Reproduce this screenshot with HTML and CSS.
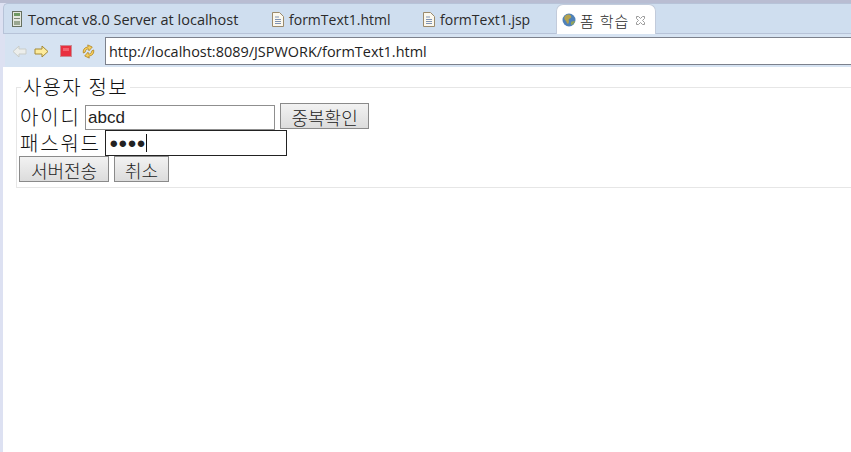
FILE: index.html
```html
<!DOCTYPE html>
<html lang="ko">

<head>
    <meta charset="UTF-8">
    <meta name="viewport" content="width=device-width, initial-scale=1.0">
    <title>폼 학습</title>
    <link rel="stylesheet" href="styles.css">
</head>

<body>

    <div class="tabs">
        <div class="tab tab-server">
            <svg class="tab-icon" width="10" height="16" viewBox="0 0 10 16">
                <rect x="0.5" y="0.5" width="9" height="15" fill="#e4e8df" stroke="#66705f" />
                <rect x="2" y="2" width="6" height="3" fill="#6f9a63" />
                <rect x="2" y="7" width="6" height="1" fill="#7d8676" />
                <rect x="2" y="10" width="6" height="4" fill="#9aa791" />
            </svg>
            <span>Tomcat v8.0 Server at localhost</span>
        </div>
        <div class="tab tab-html">
            <svg class="tab-icon" width="12" height="15" viewBox="0 0 12 15">
                <path d="M.5.5h7l4 4v10H.5z" fill="#fbf8ee" stroke="#9b8a6c" />
                <path d="M3 5h4M3 7.500h6M3 9.500h6M3 11.500h6" stroke="#7f93b5" />
            </svg>
            <span>formText1.html</span>
        </div>
        <div class="tab tab-jsp">
            <svg class="tab-icon" width="12" height="15" viewBox="0 0 12 15">
                <path d="M.5.5h7l4 4v10H.5z" fill="#fbf8ee" stroke="#9b8a6c" />
                <path d="M3 5h4M3 7.500h6M3 9.500h6M3 11.500h6" stroke="#7f93b5" />
            </svg>
            <span>formText1.jsp</span>
        </div>
        <div class="tab tab-active">
            <svg class="tab-icon" width="14" height="14" viewBox="0 0 14 14">
                <circle cx="7" cy="7" r="6.500" fill="#4f81b8" />
                <path d="M3 3c2-2 5-2 6 0 1 2-1 2-2 3s1 3-1 5C4 10 5 8 3 7 2 6 2 4 3 3z" fill="#b5a24e" />
                <path d="M9 9c1-1 3-1 4-1-1 3-3 4-4 4z" fill="#8fa35b" />
            </svg>
            <span class="tab-title">폼 학습</span>
            <svg class="tab-close" width="11" height="11" viewBox="0 0 11 11">
                <path d="M1.500 1.500h2l2 2 2-2h2v2l-2 2 2 2v2h-2l-2-2-2 2h-2v-2l2-2-2-2z" fill="#fff" stroke="#9a9a9a" />
            </svg>
        </div>
    </div>

    <div class="toolbar">
        <div class="nav-icons">
            <svg class="nav-back" width="15" height="13" viewBox="0 0 15 13">
                <path d="M7 1 1 6.500 7 12V9h7V4H7z" fill="#eceeec" stroke="#c9cdc9" />
            </svg>
            <svg class="nav-forward" width="15" height="13" viewBox="0 0 15 13">
                <path d="M8 1l6 5.500L8 12V9H1V4h7z" fill="#fdeb9c" stroke="#a58a34" />
            </svg>
            <svg class="nav-stop" width="12" height="12" viewBox="0 0 12 12">
                <rect x="0.500" y="0.500" width="11" height="11" fill="#e8303f" stroke="#c98a92" />
                <rect x="3" y="3" width="6" height="3" fill="#f4616c" />
            </svg>
            <svg class="nav-refresh" width="15" height="15" viewBox="0 0 15 15">
                <path d="M2 8c0-3 2-5 5-5h1V1l4 3-4 3V5H7C5.500 5 4.500 6 4 7.500z" fill="#f6cf5d" stroke="#b48a2a" stroke-width=".8" transform="rotate(-12 7 7)" />
                <path d="M13 7c0 3-2 5-5 5H7v2l-4-3 4-3v2h1c1.500 0 2.500-1 3-2.500z" fill="#f6cf5d" stroke="#b48a2a" stroke-width=".8" transform="rotate(-12 8 8)" />
            </svg>
        </div>
        <input class="url" type="text" value="http://localhost:8089/JSPWORK/formText1.html">
    </div>

    <div class="content">
        <fieldset class="user-box">
            <legend>사용자 정보</legend>
            <div class="row row-id">
                <label for="userid">아이디</label>
                <input class="field field-id" id="userid" type="text" value="abcd">
                <button class="btn btn-check" type="button">중복확인</button>
            </div>
            <div class="row">
                <label for="userpw">패스워드</label>
                <div class="field field-pw" id="userpw"><span class="dots">●●●●</span><span class="caret"></span></div>
            </div>
            <div class="row row-buttons">
                <button class="btn btn-send" type="button">서버전송</button>
                <button class="btn btn-cancel" type="button">취소</button>
            </div>
        </fieldset>
    </div>

</body>

</html>
```

FILE: styles.css
```css
html,
body {
    height: 100%;
}

body {
    margin: 0;
    padding: 0;
    overflow: hidden;
    display: flex;
    flex-direction: column;
    background-color: #dde1f2;
    border-top: 3px solid #b9bdd2;
    box-sizing: border-box;
    font-family: 'Noto Sans CJK KR', sans-serif;
    color: #111;
}

.tabs {
    height: 31px;
    margin-left: 3px;
    flex: none;
    display: flex;
    align-items: center;
    box-sizing: border-box;
    background-color: #cfdeef;
    border: 1px solid #b7c3d8;
    border-right: none;
    border-radius: 5px 0 0 0;
    font-family: 'Open Sans', 'Noto Sans CJK KR', sans-serif;
    font-size: 14px;
    color: #2b2b2b;
}

.tab {
    display: flex;
    align-items: center;
    height: 100%;
    padding-top: 1px;
    box-sizing: border-box;
    white-space: nowrap;
}

.tab-icon {
    flex: none;
    margin-right: 5px;
}

.tab-server {
    padding-left: 8px;
    width: 268px;
    font-size: 14.5px;
}

.tab-server .tab-icon {
    margin-right: 6px;
}

.tab-html {
    width: 151px;
}

.tab-jsp {
    width: 133px;
}

.tab-active {
    width: 100px;
    height: 31px;
    margin-top: 1px;
    padding-left: 5px;
    background-color: #fff;
    border-radius: 7px 7px 0 0;
    border: 1px solid #c2cbdb;
    border-bottom: none;
}

.tab-active .tab-icon {
    margin-right: 4px;
}

.tab-title {
    font-size: 15px;
    letter-spacing: 1px;
    font-weight: 300;
}

.tab-close {
    margin-left: 6px;
}

.toolbar {
    flex: none;
    height: 33px;
    margin-left: 5px;
    display: flex;
    align-items: center;
    background-color: #d6e3f2;
    box-sizing: border-box;
    padding-top: 1px;
}

.nav-icons {
    width: 100px;
    display: flex;
    align-items: center;
    padding-left: 7px;
    box-sizing: border-box;
}

.nav-forward {
    margin-left: 7px;
}

.nav-stop {
    margin-left: 11px;
}

.nav-refresh {
    margin-left: 9px;
}

.url {
    flex: 1;
    min-width: 0;
    height: 28px;
    box-sizing: border-box;
    border: 1px solid #7c818c;
    border-right: none;
    padding: 0 3px;
    outline: none;
    font-family: 'Open Sans', sans-serif;
    font-size: 14.45px;
    color: #222;
}

.content {
    flex: 1;
    margin-left: 3px;
    background-color: #fff;
    padding: 10px 0 0 13px;
}

.user-box {
    margin: 0;
    padding: 7px 0 5px 2px;
    box-sizing: border-box;
    min-width: 0;
    border: 1px solid #e6e6e6;
    border-right: none;
}

legend {
    padding: 0 2px;
    margin-left: 2px;
    height: 20px;
    line-height: 20px;
    font-size: 20px;
    font-weight: 300;
    letter-spacing: 1.2px;
}

.row {
    display: flex;
    align-items: flex-end;
    height: 26px;
    line-height: 22px;
    font-size: 20px;
    font-weight: 300;
    letter-spacing: 1.8px;
    white-space: nowrap;
}

.row label {
    align-self: center;
    margin-left: 1px;
    margin-right: 4.5px;
}

.field {
    box-sizing: border-box;
    padding: 0 2px;
    outline: none;
    font-family: 'Liberation Sans', sans-serif;
    font-size: 17px;
    letter-spacing: 0;
    color: #222;
}

.field-id {
    width: 190px;
    height: 25px;
    border: 1px solid #8f8f8f;
}

.field-pw {
    width: 182px;
    height: 26px;
    border: 1px solid #222;
    display: flex;
    align-items: center;
}

.dots {
    font-size: 15px;
    letter-spacing: 0;
    margin-left: 1px;
}

.caret {
    width: 1px;
    height: 18px;
    background-color: #111;
}

.btn {
    box-sizing: border-box;
    height: 26px;
    padding: 0;
    font-family: 'Noto Sans CJK KR', sans-serif;
    font-size: 18px;
    font-weight: 300;
    letter-spacing: 0;
    color: #222;
    background: linear-gradient(#f2f2f2, #dcdcdc);
    border: 1px solid #8a8a8a;
}

.btn-check {
    width: 89px;
    margin-left: 5px;
    align-self: flex-start;
    margin-top: -1px;
}

.btn-send {
    width: 90px;
}

.btn-cancel {
    width: 55px;
    margin-left: 5px;
}
```
